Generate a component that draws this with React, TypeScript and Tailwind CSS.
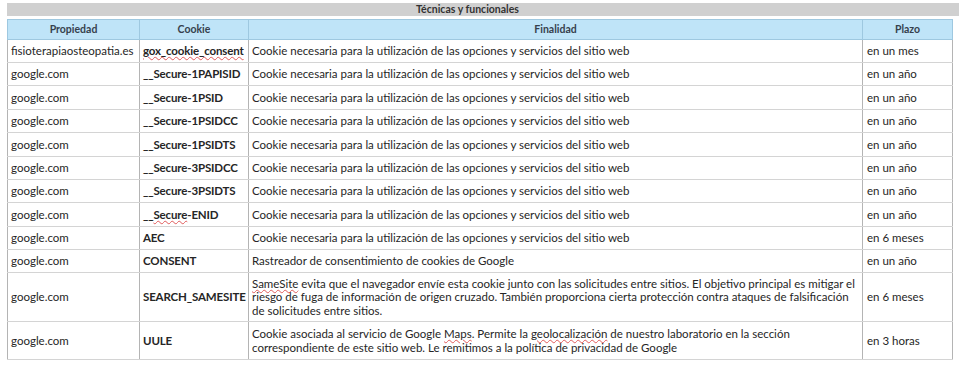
import React from "react";

type Row = {
  prop: string;
  cookie: React.ReactNode;
  desc: React.ReactNode;
  plazo: string;
  h: string;
};

const NEC = "Cookie necesaria para la utilización de las opciones y servicios del sitio web";

const Squiggle = ({ children }: { children: React.ReactNode }) => (
  <span className="underline decoration-wavy decoration-[#e05a5a] decoration-1 underline-offset-[1px]">{children}</span>
);

const rows: Row[] = [
  { prop: "fisioterapiaosteopatia.es", cookie: <Squiggle>gox_cookie_consent</Squiggle>, desc: NEC, plazo: "en un mes", h: "h-[23px]" },
  { prop: "google.com", cookie: "__Secure-1PAPISID", desc: NEC, plazo: "en un año", h: "h-[23px]" },
  { prop: "google.com", cookie: "__Secure-1PSID", desc: NEC, plazo: "en un año", h: "h-[24px]" },
  { prop: "google.com", cookie: "__Secure-1PSIDCC", desc: NEC, plazo: "en un año", h: "h-[23px]" },
  { prop: "google.com", cookie: "__Secure-1PSIDTS", desc: NEC, plazo: "en un año", h: "h-[24px]" },
  { prop: "google.com", cookie: "__Secure-3PSIDCC", desc: NEC, plazo: "en un año", h: "h-[23px]" },
  { prop: "google.com", cookie: "__Secure-3PSIDTS", desc: NEC, plazo: "en un año", h: "h-[23px]" },
  { prop: "google.com", cookie: <>__<Squiggle>Secure</Squiggle>-ENID</>, desc: NEC, plazo: "en un año", h: "h-[24px]" },
  { prop: "google.com", cookie: "AEC", desc: NEC, plazo: "en 6 meses", h: "h-[23px]" },
  { prop: "google.com", cookie: "CONSENT", desc: "Rastreador de consentimiento de cookies de Google", plazo: "en un año", h: "h-[23px]" },
  {
    prop: "google.com",
    cookie: "SEARCH_SAMESITE",
    desc: (
      <>
        <Squiggle>SameSite</Squiggle> evita que el navegador envíe esta cookie junto con las solicitudes entre sitios. El objetivo principal es mitigar el riesgo de fuga de información de origen cruzado. También proporciona cierta protección contra ataques de falsificación de solicitudes entre sitios.
      </>
    ),
    plazo: "en 6 meses",
    h: "h-[49px]",
  },
  {
    prop: "google.com",
    cookie: "UULE",
    desc: (
      <>
        Cookie asociada al servicio de Google <Squiggle>Maps</Squiggle>. Permite la <Squiggle>geolocalización</Squiggle> de nuestro laboratorio en la sección
        <br />
        correspondiente de este sitio web. Le remitimos a la política de privacidad de Google
      </>
    ),
    plazo: "en 3 horas",
    h: "h-[38px]",
  },
];

export default function App() {
  return (
    <div className="w-[959px] h-[365px] bg-white pt-[3px] pl-[7px] text-[11.5px] text-[#262626] font-['Lato',sans-serif]">
      {/* TITLE BAR */}
      <div className="h-[13px] bg-[#d0d0d0] flex items-center justify-center pr-[31px] text-[10.5px] font-bold text-[#333] leading-none">
        Técnicas y funcionales
      </div>

      <table className="mt-[3px] table-fixed border-collapse w-[945px]">
        <colgroup>
          <col className="w-[132px]" />
          <col className="w-[109px]" />
          <col className="w-[614px]" />
          <col className="w-[90px]" />
        </colgroup>
        <thead>
          <tr className="h-[20px] bg-[#bfe4f8] text-[10.5px] font-bold text-[#36414d]">
            <th className="border border-[#9ec8e0] text-center">Propiedad</th>
            <th className="border border-[#9ec8e0] text-center">Cookie</th>
            <th className="border border-[#9ec8e0] text-center">Finalidad</th>
            <th className="border border-[#9ec8e0] text-center">Plazo</th>
          </tr>
        </thead>
        <tbody>
          {rows.map((r, i) => (
            <tr key={i} className={r.h}>
              <td className="border-x border-x-[#b4b4b4] border-b border-b-[#d4d4d4] px-[3px] align-middle whitespace-nowrap">{r.prop}</td>
              <td className="border-x border-x-[#b4b4b4] border-b border-b-[#d4d4d4] px-[3px] align-middle font-bold tracking-[-0.15px] whitespace-nowrap">{r.cookie}</td>
              <td className="border-x border-x-[#b4b4b4] border-b border-b-[#d4d4d4] px-[3px] align-middle leading-[13.5px]">{r.desc}</td>
              <td className="border-x border-x-[#b4b4b4] border-b border-b-[#d4d4d4] px-[4px] align-middle whitespace-nowrap">{r.plazo}</td>
            </tr>
          ))}
        </tbody>
      </table>
    </div>
  );
}
